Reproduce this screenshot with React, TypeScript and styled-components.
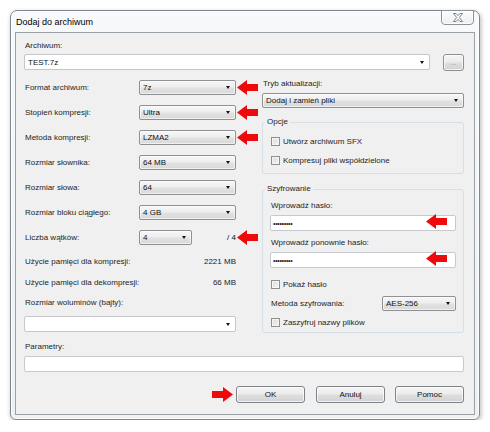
import React from "react";
import styled, { createGlobalStyle } from "styled-components";

const GlobalStyle = createGlobalStyle`
  html, body { margin: 0; padding: 0; background: #ffffff; }
  body {
    font-family: "Liberation Sans", Arial, sans-serif;
    font-size: 8px;
    color: #1e1e1e;
  }
  * { box-sizing: border-box; }
`;

const Page = styled.div`
  padding: 10px 0 0 10px;
`;

const Window = styled.div`
  position: relative;
  width: 470px;
  height: 410px;
  border: 1px solid #80868b;
  border-radius: 7px 7px 6px 6px;
  background: linear-gradient(180deg, #f7f9fb 0%, #eef1f4 100%);
  box-shadow: 1px 2px 5px rgba(0, 0, 0, 0.28), inset 0 0 0 1px rgba(255, 255, 255, 0.9);
  padding: 0 4px 4px 4px;
  display: flex;
  flex-direction: column;
`;

const TitleBar = styled.div`
  height: 21px;
  display: flex;
  align-items: center;
  padding-left: 1px;
  font-size: 9px;
  color: #000;
`;

const CloseButton = styled.div`
  position: absolute;
  top: -1px;
  right: 5px;
  width: 33px;
  height: 15px;
  border: 1px solid #8d9297;
  border-radius: 0 0 4px 4px;
  background: linear-gradient(180deg, #fbfcfd 0%, #eceff2 100%);
  box-shadow: inset 0 0 0 1px rgba(255, 255, 255, 0.8);
  display: flex;
  align-items: center;
  justify-content: center;
`;

const Client = styled.div`
  flex: 1;
  border: 1px solid #9aa1a7;
  background: #f0f0f0;
  padding: 7px 10px 0 8px;
  display: flex;
  flex-direction: column;
`;

const FieldLabel = styled.div<{ $mt?: number }>`
  height: 12px;
  line-height: 12px;
  padding-left: 1px;
  margin-top: ${(p) => p.$mt ?? 0}px;
  white-space: nowrap;
`;

const ArchiveRow = styled.div`
  margin-top: 2px;
  display: flex;
  align-items: flex-start;
  gap: 13px;
  height: 17px;
`;

const EditCombo = styled.div<{ $width?: number; $mt?: number }>`
  width: ${(p) => (p.$width ? `${p.$width}px` : "100%")};
  height: 16px;
  margin-top: ${(p) => p.$mt ?? 0}px;
  background: #ffffff;
  border: 1px solid #c3c7cb;
  border-radius: 2px;
  display: flex;
  align-items: center;
  padding-left: 3px;
`;

const DropDown = styled.div<{ $width?: number; $mt?: number }>`
  width: ${(p) => (p.$width ? `${p.$width}px` : "100%")};
  height: 15px;
  margin-top: ${(p) => p.$mt ?? 0}px;
  border: 1px solid #8e9093;
  border-radius: 2px;
  background: linear-gradient(180deg, #f7f7f7 0%, #eeeeee 45%, #e1e1e1 55%, #d9d9d9 100%);
  box-shadow: inset 0 0 0 1px rgba(255, 255, 255, 0.6);
  display: flex;
  align-items: center;
  padding-left: 3px;
`;

const Value = styled.span`
  white-space: nowrap;
  color: #111;
`;

const Caret = styled.span`
  margin-left: auto;
  margin-right: 5px;
  width: 0;
  height: 0;
  border-left: 2.5px solid transparent;
  border-right: 2.5px solid transparent;
  border-top: 3px solid #111;
`;

const BrowseButton = styled.div`
  width: 21px;
  height: 17px;
  border: 1px solid #8e9093;
  border-radius: 3px;
  background: linear-gradient(180deg, #f6f6f6 0%, #ececec 45%, #dedede 55%, #d3d3d3 100%);
  box-shadow: inset 0 0 0 1px rgba(255, 255, 255, 0.7);
  display: flex;
  align-items: center;
  justify-content: center;
  font-size: 6px;
  color: #666;
  letter-spacing: 0.5px;
`;

const Columns = styled.div`
  margin-top: 7px;
  display: grid;
  grid-template-columns: 212px 202px;
  column-gap: 26px;
  align-items: start;
`;

const LeftColumn = styled.div`
  display: flex;
  flex-direction: column;
  padding-top: 2px;
`;

const SettingRow = styled.div<{ $mt?: number }>`
  position: relative;
  height: 15px;
  margin-top: ${(p) => p.$mt ?? 0}px;
  display: grid;
  grid-template-columns: 115px 1fr;
  align-items: center;
`;

const RowLabel = styled.span`
  padding-left: 1px;
  white-space: nowrap;
`;

const ThreadCell = styled.div`
  display: flex;
  align-items: center;
  justify-content: space-between;
`;

const InfoRow = styled.div<{ $mt?: number }>`
  height: 12px;
  line-height: 12px;
  margin-top: ${(p) => p.$mt ?? 0}px;
  display: flex;
  justify-content: space-between;
  padding-left: 1px;
  white-space: nowrap;
`;

const ArrowMark = styled.span<{ $top?: number }>`
  position: absolute;
  left: calc(100% + 1px);
  top: ${(p) => p.$top ?? 0}px;
  display: flex;
`;

const RightColumn = styled.div`
  display: flex;
  flex-direction: column;
`;

const Group = styled.fieldset<{ $mt?: number }>`
  margin: ${(p) => p.$mt ?? 0}px 0 0 0;
  padding: 0 7px 0 7px;
  border: 1px solid #d5dfe5;
  border-radius: 3px;
  min-width: 0;
  display: flex;
  flex-direction: column;
`;

const GroupTitle = styled.legend`
  height: 12px;
  line-height: 12px;
  padding: 0 2px;
  margin-left: -5px;
  color: #1e1e1e;
`;

const CheckRow = styled.div<{ $mt?: number }>`
  height: 12px;
  margin-top: ${(p) => p.$mt ?? 0}px;
  padding-left: 1px;
  display: flex;
  align-items: center;
  gap: 3px;
  white-space: nowrap;
`;

const CheckBox = styled.span`
  width: 9px;
  height: 9px;
  border: 1px solid #8f8f8f;
  background: linear-gradient(135deg, #dcdcdc 0%, #f4f4f4 100%);
  box-shadow: inset 0 0 0 1px #f6f6f6;
`;

const PasswordBox = styled.div<{ $mt?: number }>`
  position: relative;
  height: 16px;
  margin-top: ${(p) => p.$mt ?? 0}px;
  background: #ffffff;
  border: 1px solid #c6cacf;
  border-radius: 2px;
  display: flex;
  align-items: center;
  padding-left: 2px;
`;

const Dots = styled.span`
  font-size: 7px;
  letter-spacing: -0.3px;
  color: #222;
`;

const InlineArrow = styled.span`
  position: absolute;
  right: 8px;
  top: -2px;
  display: flex;
`;

const MethodRow = styled.div<{ $mt?: number }>`
  height: 15px;
  margin-top: ${(p) => p.$mt ?? 0}px;
  display: flex;
  align-items: center;
  justify-content: space-between;
  padding-left: 0;
  white-space: nowrap;
`;

const GroupSpacer = styled.div<{ $h: number }>`
  height: ${(p) => p.$h}px;
`;

const TextBox = styled.div<{ $mt?: number }>`
  height: 16px;
  margin-top: ${(p) => p.$mt ?? 0}px;
  background: #ffffff;
  border: 1px solid #c6cacf;
  border-radius: 2px;
`;

const ButtonRow = styled.div`
  margin-top: 14px;
  display: flex;
  justify-content: flex-end;
  align-items: center;
`;

const DialogButton = styled.div<{ $ml?: number }>`
  width: 69px;
  height: 17px;
  margin-left: ${(p) => p.$ml ?? 0}px;
  border: 1px solid #7f8286;
  border-radius: 3px;
  background: linear-gradient(180deg, #f6f6f6 0%, #ececec 45%, #dedede 55%, #d2d2d2 100%);
  box-shadow: inset 0 0 0 1px rgba(255, 255, 255, 0.7);
  display: flex;
  align-items: center;
  justify-content: center;
  color: #111;
`;

const ButtonArrow = styled.span`
  display: flex;
  margin-right: 3px;
`;

function RedArrow({ dir = "left" }: { dir?: "left" | "right" }) {
  return (
    <svg width="21" height="15" viewBox="0 0 21 15">
      <polygon
        points="0,7.5 10,0 10,4 21,4 21,11 10,11 10,15"
        fill="#ee0a0a"
        transform={dir === "right" ? "translate(21,0) scale(-1,1)" : undefined}
      />
    </svg>
  );
}

function CloseGlyph() {
  return (
    <svg width="10" height="9" viewBox="0 0 10 9">
      <polygon
        points="0.5,0.5 3,0.5 5,2.6 7,0.5 9.5,0.5 6.3,4.5 9.5,8.5 7,8.5 5,6.4 3,8.5 0.5,8.5 3.7,4.5"
        fill="#ffffff"
        stroke="#7d8287"
        strokeWidth="1"
        strokeLinejoin="round"
      />
    </svg>
  );
}

const comboRows = [
  { label: "Format archiwum:", value: "7z", arrow: true },
  { label: "Stopień kompresji:", value: "Ultra", arrow: true },
  { label: "Metoda kompresji:", value: "LZMA2", arrow: true },
  { label: "Rozmiar słownika:", value: "64 MB", arrow: false },
  { label: "Rozmiar słowa:", value: "64", arrow: false },
  { label: "Rozmiar bloku ciągłego:", value: "4 GB", arrow: false },
];

export default function App() {
  return (
    <>
      <GlobalStyle />
      <Page>
        <Window>
          <TitleBar>Dodaj do archiwum</TitleBar>
          <CloseButton>
            <CloseGlyph />
          </CloseButton>
          <Client>
            <FieldLabel>Archiwum:</FieldLabel>
            <ArchiveRow>
              <EditCombo $width={406}>
                <Value>TEST.7z</Value>
                <Caret />
              </EditCombo>
              <BrowseButton>...</BrowseButton>
            </ArchiveRow>

            <Columns>
              <LeftColumn>
                {comboRows.map((r, i) => (
                  <SettingRow key={r.label} $mt={i === 0 ? 0 : 10}>
                    <RowLabel>{r.label}</RowLabel>
                    <DropDown>
                      <Value>{r.value}</Value>
                      <Caret />
                    </DropDown>
                    {r.arrow && (
                      <ArrowMark>
                        <RedArrow />
                      </ArrowMark>
                    )}
                  </SettingRow>
                ))}
                <SettingRow $mt={10}>
                  <RowLabel>Liczba wątków:</RowLabel>
                  <ThreadCell>
                    <DropDown $width={53}>
                      <Value>4</Value>
                      <Caret />
                    </DropDown>
                    <Value>/ 4</Value>
                  </ThreadCell>
                  <ArrowMark>
                    <RedArrow />
                  </ArrowMark>
                </SettingRow>
                <InfoRow $mt={11}>
                  <span>Użycie pamięci dla kompresji:</span>
                  <span>2221 MB</span>
                </InfoRow>
                <InfoRow $mt={9}>
                  <span>Użycie pamięci dla dekompresji:</span>
                  <span>66 MB</span>
                </InfoRow>
                <FieldLabel $mt={8}>Rozmiar woluminów (bajty):</FieldLabel>
                <EditCombo $mt={7}>
                  <Caret />
                </EditCombo>
              </LeftColumn>

              <RightColumn>
                <FieldLabel>Tryb aktualizacji:</FieldLabel>
                <DropDown $mt={3}>
                  <Value>Dodaj i zamień pliki</Value>
                  <Caret />
                </DropDown>

                <Group $mt={8}>
                  <GroupTitle>Opcje</GroupTitle>
                  <CheckRow $mt={7}>
                    <CheckBox />
                    <span>Utwórz archiwum SFX</span>
                  </CheckRow>
                  <CheckRow $mt={7}>
                    <CheckBox />
                    <span>Kompresuj pliki współdzielone</span>
                  </CheckRow>
                  <GroupSpacer $h={7} />
                </Group>

                <Group $mt={9}>
                  <GroupTitle>Szyfrowanie</GroupTitle>
                  <FieldLabel $mt={5}>Wprowadź hasło:</FieldLabel>
                  <PasswordBox $mt={3}>
                    <Dots>•••••••••</Dots>
                    <InlineArrow>
                      <RedArrow />
                    </InlineArrow>
                  </PasswordBox>
                  <FieldLabel $mt={6}>Wprowadź ponownie hasło:</FieldLabel>
                  <PasswordBox $mt={3}>
                    <Dots>•••••••••</Dots>
                    <InlineArrow>
                      <RedArrow />
                    </InlineArrow>
                  </PasswordBox>
                  <CheckRow $mt={10}>
                    <CheckBox />
                    <span>Pokaż hasło</span>
                  </CheckRow>
                  <MethodRow $mt={6}>
                    <RowLabel>Metoda szyfrowania:</RowLabel>
                    <DropDown $width={74}>
                      <Value>AES-256</Value>
                      <Caret />
                    </DropDown>
                  </MethodRow>
                  <CheckRow $mt={5}>
                    <CheckBox />
                    <span>Zaszyfruj nazwy plików</span>
                  </CheckRow>
                  <GroupSpacer $h={4} />
                </Group>
              </RightColumn>
            </Columns>

            <FieldLabel $mt={8}>Parametry:</FieldLabel>
            <TextBox $mt={3} />

            <ButtonRow>
              <ButtonArrow>
                <RedArrow dir="right" />
              </ButtonArrow>
              <DialogButton>OK</DialogButton>
              <DialogButton $ml={11}>Anuluj</DialogButton>
              <DialogButton $ml={10}>Pomoc</DialogButton>
            </ButtonRow>
          </Client>
        </Window>
      </Page>
    </>
  );
}
